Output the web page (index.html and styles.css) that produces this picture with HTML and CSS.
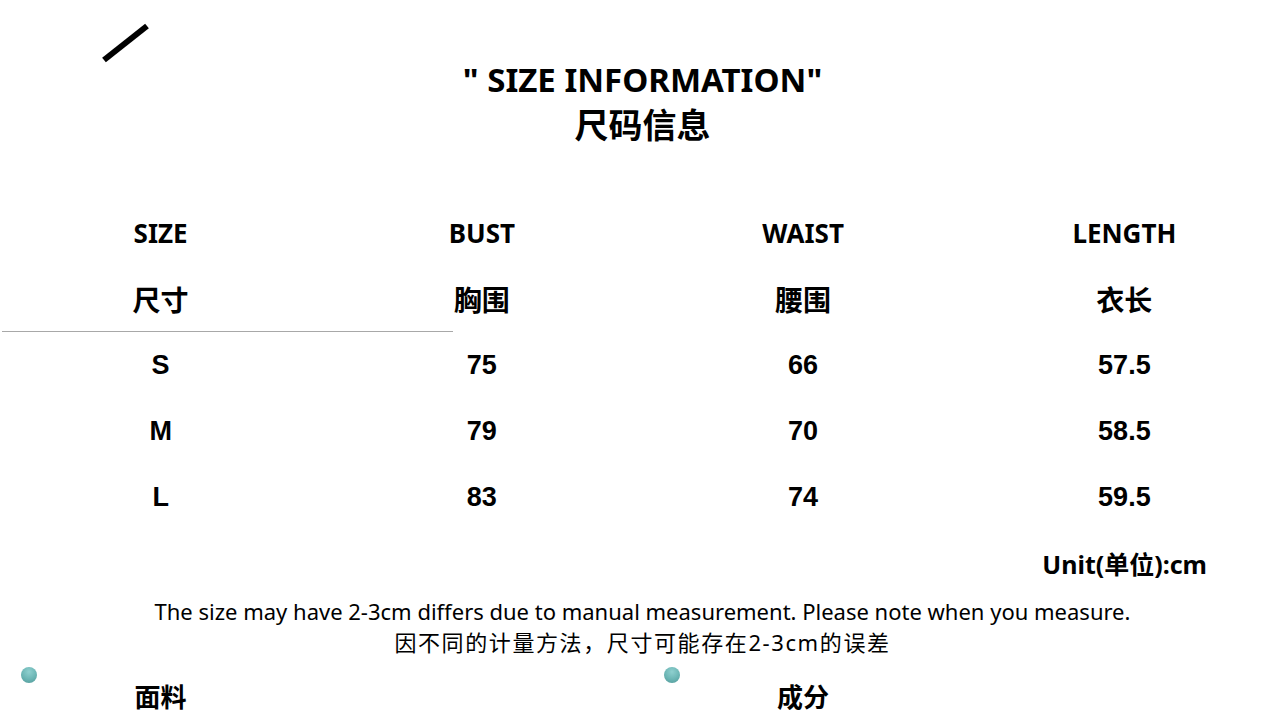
FILE: index.html
```html
<!DOCTYPE html>
<html lang="zh-CN">
<head>
<meta charset="utf-8">
<title>Size information</title>
<link rel="stylesheet" href="styles.css">
</head>
<body>
<div class="page">
  <header class="head">
    <svg class="slash" width="52" height="45" viewBox="0 0 52 45"><line x1="4" y1="40" x2="47" y2="6" stroke="#000" stroke-width="6"/></svg>
    <h1 class="title-en">" SIZE INFORMATION"</h1>
    <h2 class="title-cn">尺码信息</h2>
  </header>

  <section class="table">
    <div class="row head-row"><span>SIZE</span><span>BUST</span><span>WAIST</span><span>LENGTH</span></div>
    <div class="row cn-row"><span>尺寸</span><span>胸围</span><span>腰围</span><span>衣长</span></div>
    <div class="divider"></div>
    <div class="row num-row"><span>S</span><span>75</span><span>66</span><span>57.5</span></div>
    <div class="row num-row"><span>M</span><span>79</span><span>70</span><span>58.5</span></div>
    <div class="row num-row"><span>L</span><span>83</span><span>74</span><span>59.5</span></div>
  </section>

  <div class="unit">Unit(单位):cm</div>

  <div class="note">
    <p>The size may have 2-3cm differs due to manual measurement. Please note when you measure.</p>
    <p class="note-cn">因不同的计量方法，尺寸可能存在2-3cm的误差</p>
  </div>

  <section class="bottom">
    <div class="bcol"><span class="dot"></span><span class="blabel">面料</span></div>
    <div class="bcol"><span class="dot"></span><span class="blabel">成分</span></div>
  </section>
</div>
</body>
</html>
```

FILE: styles.css
```css
html, body {
  margin: 0;
  padding: 0;
  background: #fff;
  color: #000;
}
body {
  width: 1285px;
  height: 727px;
  overflow: hidden;
  font-family: "Noto Sans", "Noto Sans CJK SC", sans-serif;
}
.page {
  width: 1285px;
}
.head {
  position: relative;
  padding-top: 58px;
  height: 142px;
  box-sizing: border-box;
  text-align: center;
}
.slash {
  position: absolute;
  left: 100px;
  top: 20px;
}
.title-en {
  margin: 0;
  font-family: "Noto Sans", "Noto Sans CJK SC", sans-serif;
  font-weight: 700;
  font-size: 33px;
  line-height: 44px;
}
.title-cn {
  margin: 0;
  font-family: "Noto Sans CJK SC", sans-serif;
  font-weight: 700;
  font-size: 34px;
  line-height: 44px;
}
.table {
  margin-top: 58px;
}
.row {
  display: grid;
  grid-template-columns: repeat(4, 1fr);
  height: 66px;
  align-items: center;
  text-align: center;
}
.head-row {
  font-family: "Noto Sans", "Noto Sans CJK SC", sans-serif;
  font-weight: 700;
  font-size: 26px;
}
.cn-row {
  height: 65px;
  font-family: "Noto Sans CJK SC", sans-serif;
  font-weight: 700;
  font-size: 28px;
}
.divider {
  width: 451px;
  height: 1px;
  margin-left: 2px;
  background: #a8a8a8;
}
.num-row {
  font-family: "Liberation Sans", Arial, sans-serif;
  font-weight: 700;
  font-size: 27px;
}
.unit {
  margin-top: 20px;
  padding-right: 78px;
  text-align: right;
  font-family: "Noto Sans", "Noto Sans CJK SC", sans-serif;
  font-weight: 700;
  font-size: 25px;
  line-height: 28px;
}
.note {
  margin-top: 18px;
  text-align: center;
  font-family: "Noto Sans", "Noto Sans CJK SC", sans-serif;
  font-size: 22px;
  line-height: 31px;
}
.note p {
  margin: 0;
}
.note .note-cn {
  letter-spacing: 1.6px;
}
.bottom {
  display: grid;
  grid-template-columns: 1fr 1fr;
  margin-top: 9px;
}
.bcol {
  display: flex;
  flex-direction: column;
}
.dot {
  width: 16px;
  height: 16px;
  margin-left: 21px;
  border-radius: 50%;
  background: radial-gradient(circle at 50% 30%, #8fd0cf 0%, #6bb5b4 55%, #4f9796 100%);
}
.blabel {
  width: 321px;
  margin-top: -2px;
  text-align: center;
  font-family: "Noto Sans CJK SC", sans-serif;
  font-weight: 700;
  font-size: 26px;
  line-height: 30px;
}
```
